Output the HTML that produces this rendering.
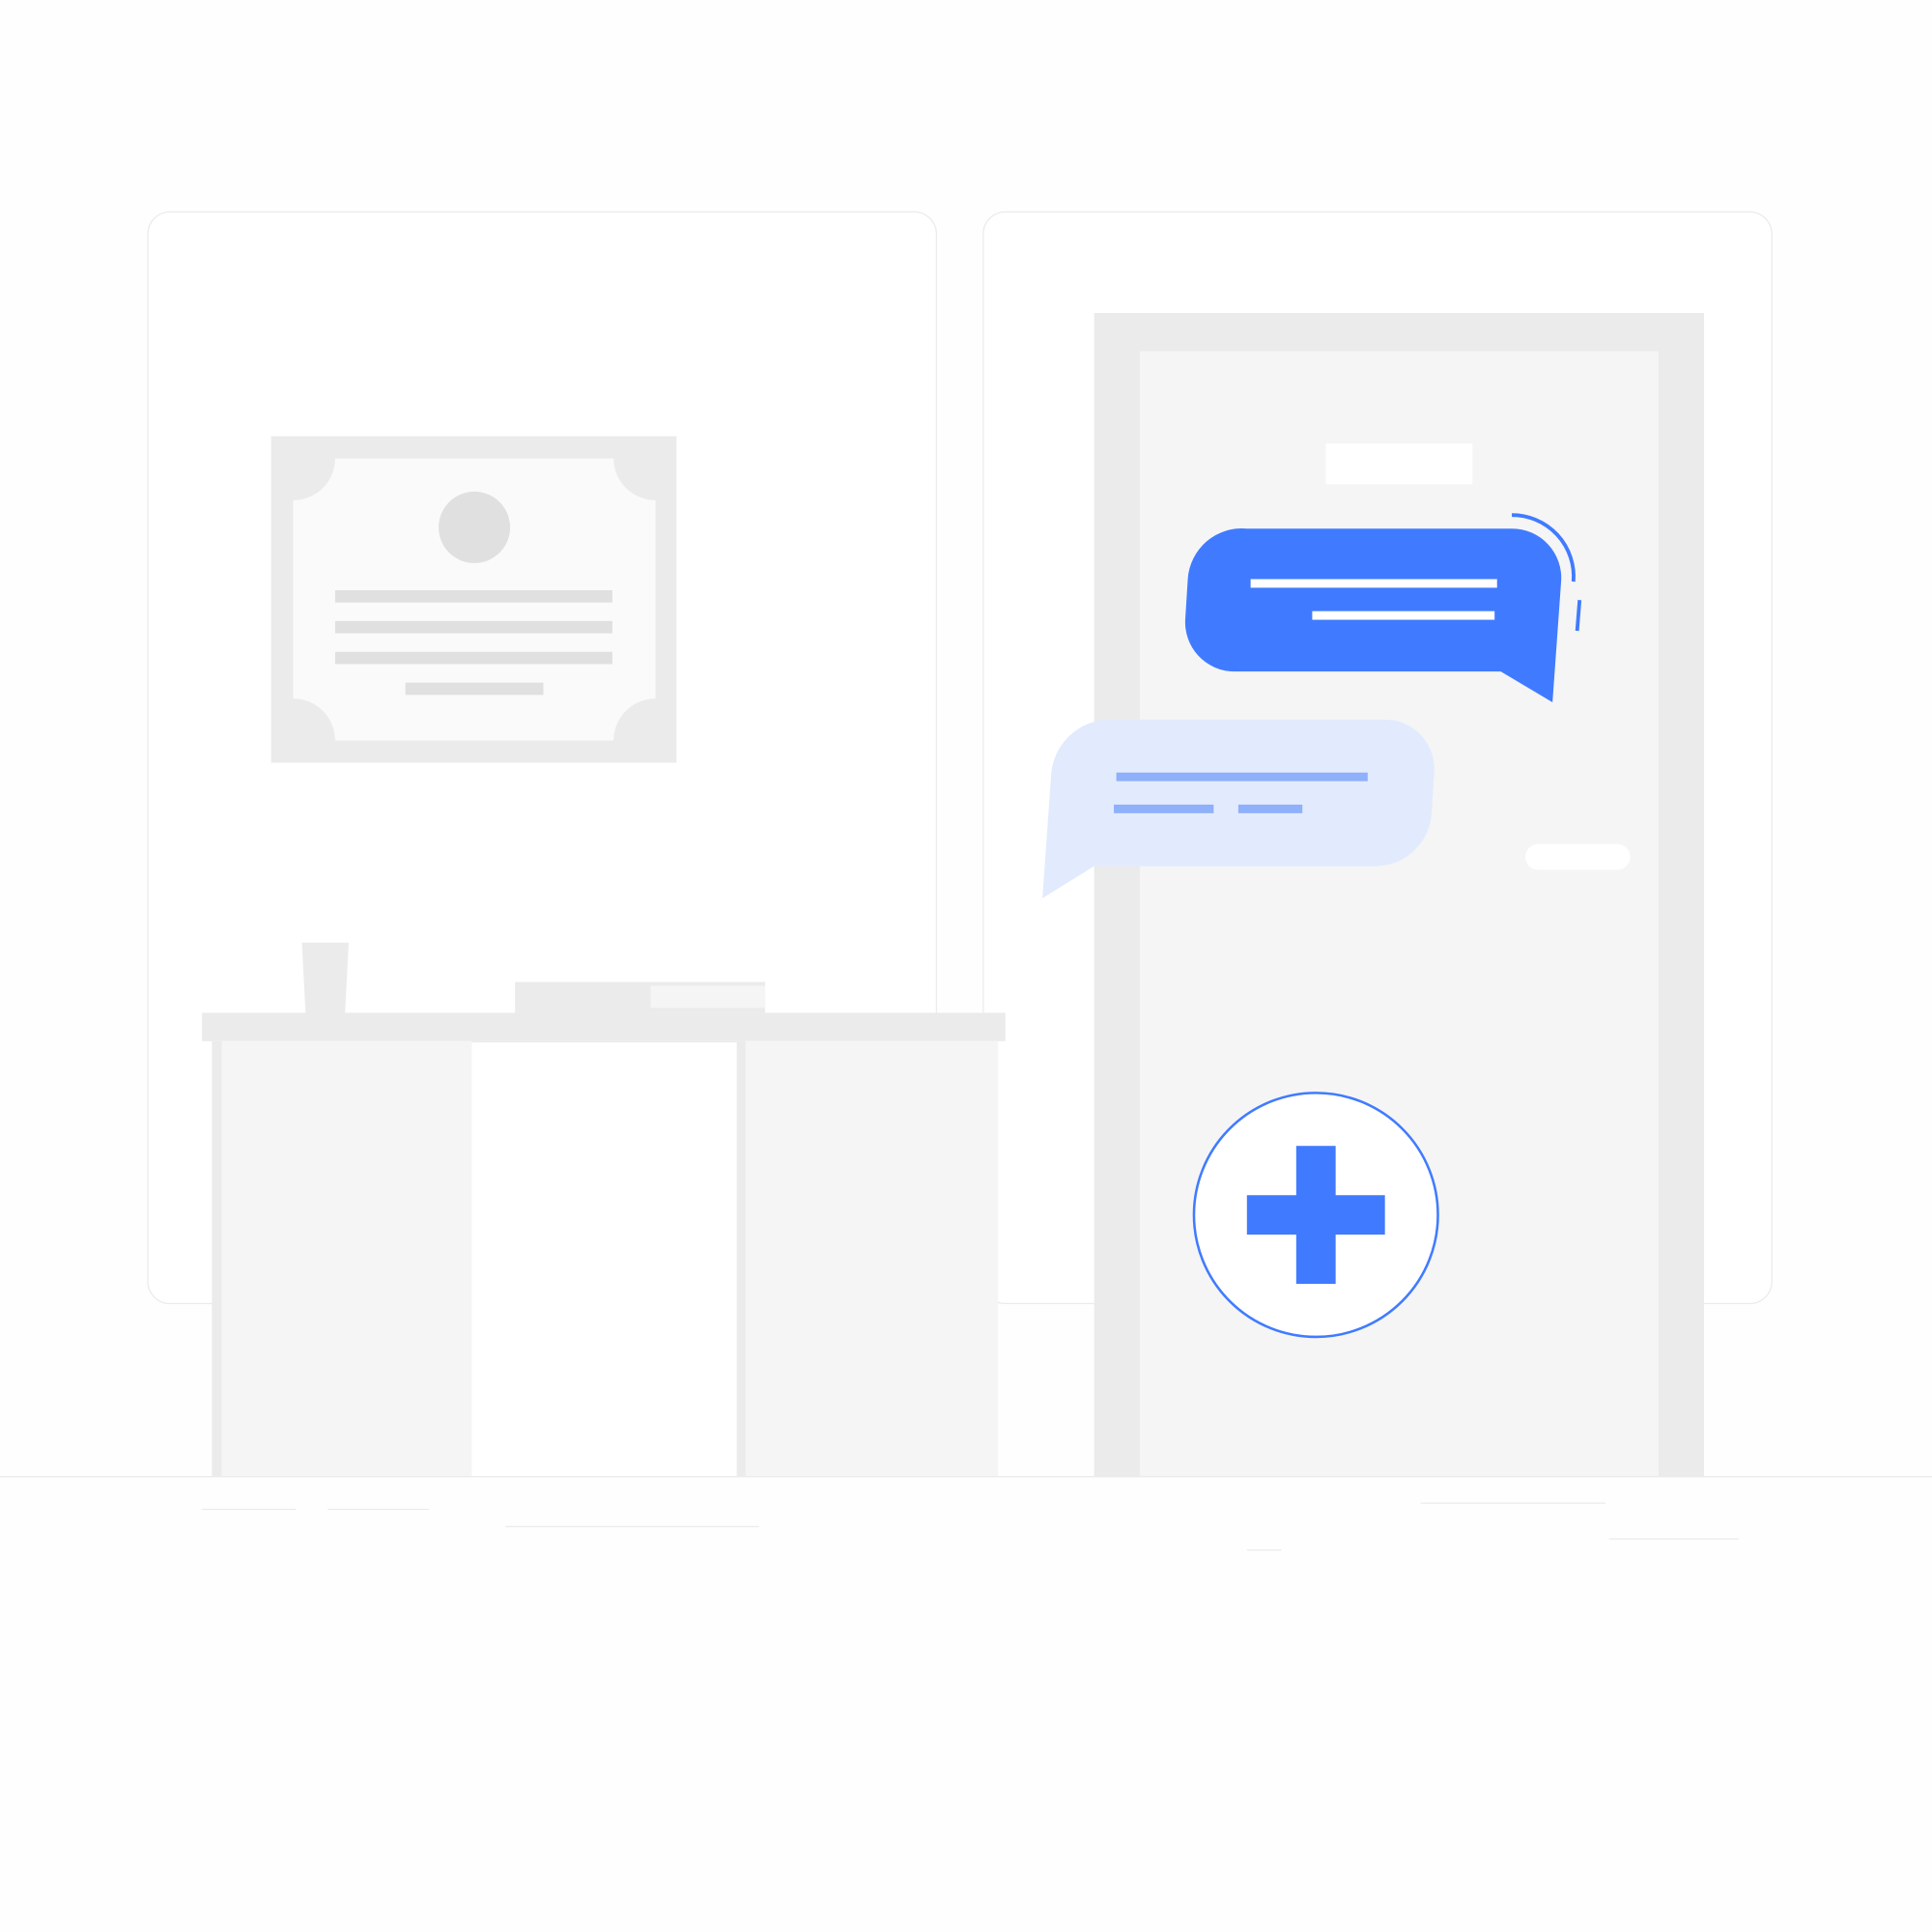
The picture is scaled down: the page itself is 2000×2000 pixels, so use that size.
<!DOCTYPE html>
<html><head><meta charset="utf-8"><style>html,body{margin:0;padding:0;background:#fff}svg{display:block}</style></head>
<body>
<svg width="2000" height="2000" viewBox="0 0 1568 1568" xmlns="http://www.w3.org/2000/svg">
<rect width="1568" height="1568" fill="#fefefe"/>
<rect x="120" y="172" width="640" height="886" rx="18" fill="#fff" stroke="#ebebeb" stroke-width="1"/>
<rect x="798" y="172" width="640" height="886" rx="18" fill="#fff" stroke="#ebebeb" stroke-width="1"/>
<!-- door -->
<rect x="888" y="254" width="495" height="944" fill="#ebebeb"/>
<rect x="925" y="285" width="421" height="913" fill="#f5f5f5"/>
<rect x="1076" y="360" width="119" height="33" fill="#fff"/>
<rect x="1238" y="685" width="85" height="21" rx="10.5" fill="#fff"/>
<!-- ground -->
<line x1="0" y1="1198.5" x2="1568" y2="1198.5" stroke="#ebebeb" stroke-width="1"/>
<g stroke="#ebebeb" stroke-width="1">
<line x1="164" y1="1225" x2="240" y2="1225"/><line x1="266" y1="1225" x2="348" y2="1225"/>
<line x1="410" y1="1239" x2="616" y2="1239"/><line x1="1153" y1="1220" x2="1303" y2="1220"/>
<line x1="1306" y1="1249" x2="1411" y2="1249"/><line x1="1012" y1="1258" x2="1040" y2="1258"/>
</g>
<!-- certificate -->
<rect x="220" y="354" width="329" height="265" fill="#ebebeb"/>
<path d="M272 372 H498 A34 34 0 0 0 532 406 V567 A34 34 0 0 0 498 601 H272 A34 34 0 0 0 238 567 V406 A34 34 0 0 0 272 372 Z" fill="#fafafa"/>
<circle cx="385" cy="428" r="29" fill="#e0e0e0"/>
<g fill="#e0e0e0"><rect x="272" y="479" width="225" height="10"/><rect x="272" y="504" width="225" height="10"/><rect x="272" y="529" width="225" height="10"/><rect x="329" y="554" width="112" height="10"/></g>
<!-- desk -->
<polygon points="245,765 283,765 280,822 248,822" fill="#ebebeb"/>
<rect x="418" y="797" width="203" height="25" fill="#ebebeb"/>
<rect x="528" y="800" width="93" height="18" fill="#f5f5f5"/>
<rect x="164" y="822" width="652" height="23" fill="#ebebeb"/>
<rect x="172" y="845" width="211" height="353" fill="#f5f5f5"/>
<rect x="172" y="845" width="8" height="353" fill="#ebebeb"/>
<rect x="383" y="845" width="215" height="353" fill="#fff"/>
<line x1="383" y1="845.5" x2="598" y2="845.5" stroke="#ebebeb"/>
<rect x="598" y="845" width="212" height="353" fill="#f5f5f5"/>
<rect x="598" y="845" width="7" height="353" fill="#ebebeb"/>
<!-- blue bubble -->
<path d="M1012 429 H1227 A40 40 0 0 1 1267 472 L1260 570 L1218 545 H1002 A40 40 0 0 1 962 502 L964 470 A44 44 0 0 1 1012 429 Z" fill="#407bff"/>
<rect x="1015" y="470" width="200" height="7" fill="#fff"/>
<rect x="1065" y="496" width="148" height="7" fill="#fff"/>
<path d="M1227 418 A50 50 0 0 1 1277 472" fill="none" stroke="#407bff" stroke-width="3"/>
<line x1="1282" y1="487" x2="1280" y2="512" stroke="#407bff" stroke-width="3"/>
<!-- light bubble -->
<path d="M900 584 H1125 A40 40 0 0 1 1164 627 L1162 658 A46 46 0 0 1 1115 703 H888 L846 729 L853 630 A48 48 0 0 1 900 584 Z" fill="#e2ebfd"/>
<g fill="#8fb0fb"><rect x="906" y="627" width="204" height="7"/><rect x="904" y="653" width="81" height="7"/><rect x="1005" y="653" width="52" height="7"/></g>
<!-- plus -->
<circle cx="1068" cy="986" r="99" fill="#fff" stroke="#407bff" stroke-width="2"/>
<rect x="1052" y="930" width="32" height="112" fill="#407bff"/>
<rect x="1012" y="970" width="112" height="32" fill="#407bff"/>
</svg>
</body></html>
